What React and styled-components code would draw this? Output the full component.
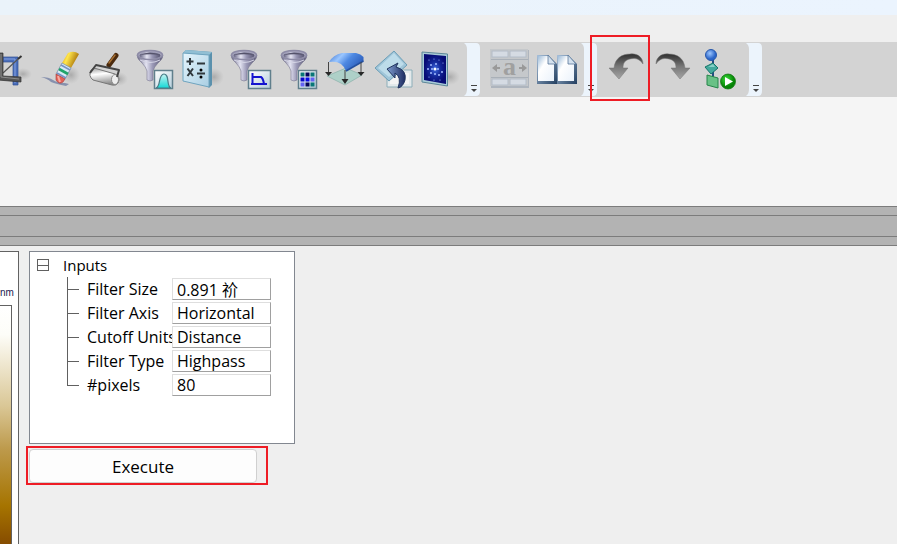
import React from "react";
import styled, { createGlobalStyle } from "styled-components";

const GlobalStyle = createGlobalStyle`
  *, *::before, *::after { box-sizing: border-box; }
  body {
    margin: 0;
    background: #efefef;
    color: #000;
    font-family: "Open Sans", "Noto Sans CJK SC", sans-serif;
    font-size: 15px;
  }
  button, input, select { font: inherit; color: inherit; }
`;

const Page = styled.div`
  min-height: 100vh;
  display: flex;
  flex-direction: column;
  overflow: hidden;
`;

const TitleStrip = styled.div`
  height: 15px;
  background: linear-gradient(90deg, #eaf3fa, #ebf4fe);
`;

const MenuStrip = styled.div`
  height: 27px;
  background: #efefef;
`;

const Toolbar = styled.div`
  height: 55px;
  display: flex;
  gap: 5px;
  background: #d3d3d3;
`;

const ToolGroup = styled.div`
  display: flex;
  flex: none;
`;

const ToolButton = styled.button`
  position: relative;
  width: ${(p) => (p.$clipped ? 32 : 48)}px;
  height: 55px;
  padding: 0;
  border: 0;
  background: none;
  display: flex;
  justify-content: flex-end;
  svg { flex: none; display: block; }
`;

const OverflowButton = styled.button`
  width: 16px;
  height: 55px;
  padding: 0;
  border: 0;
  background: none;
  svg { display: block; }
`;

const Marker = styled.span`
  position: absolute;
  inset: -7px 0 -4px -12px;
  border: 2px solid #ee1c25;
  pointer-events: none;
`;

const Workspace = styled.div`
  height: 109px;
  background: #f5f5f5;
`;

const Divider = styled.div`
  height: 40px;
  flex: none;
  padding: 8px 0;
  background: #b3b3b3;
  border-top: 1px solid #7c7c7c;
  border-bottom: 1px solid #7c7c7c;
  &::before {
    content: "";
    display: block;
    height: 22px;
    border-top: 1px solid #7c7c7c;
    border-bottom: 1px solid #7c7c7c;
  }
`;

const Content = styled.main`
  flex: 1;
  display: flex;
  align-items: stretch;
  gap: 7px;
  padding-top: 5px;
`;

const ScalePanel = styled.section`
  width: 19px;
  display: flex;
  flex-direction: column;
  background: #fff;
  border: solid #626262;
  border-width: 1px 1px 0 0;
`;

const ScaleUnit = styled.div`
  height: 53px;
  padding-top: 34px;
  font-family: "Liberation Sans", sans-serif;
  font-size: 10px;
  line-height: 14px;
  color: #1c1c50;
`;

const ScaleBar = styled.div`
  flex: 1;
  width: 12px;
  border: solid #626262;
  border-width: 1px 1px 0 0;
  background: linear-gradient(#fff 0%, #fdfdf8 12%, #dac796 42%, #bd9a4c 60%, #a67400 84%, #864c00 100%);
`;

const Side = styled.form`
  width: 269px;
  display: flex;
  flex-direction: column;
  align-items: flex-start;
  gap: 2px;
`;

const Tree = styled.div`
  width: 266px;
  min-height: 193px;
  margin-left: 3px;
  padding: 1px 0 0 7px;
  background: #fff;
  border: 1px solid #828790;
`;

const TreeHead = styled.button`
  display: flex;
  align-items: center;
  gap: 14px;
  height: 24px;
  padding: 0;
  border: 0;
  background: none;
  line-height: 24px;
`;

const Toggle = styled.span`
  width: 12px;
  height: 12px;
  border: 1px solid #606060;
  display: flex;
  align-items: center;
  &::before { content: ""; flex: 1; height: 1px; background: #606060; }
`;

const Row = styled.div`
  display: grid;
  grid-template-columns: 12px 93px 99px;
  align-items: center;
  height: 24px;
  margin-left: 30px;
`;

const Branch = styled.span`
  align-self: stretch;
  display: flex;
  flex-direction: column;
  border-left: ${(p) => (p.$last ? 0 : 1)}px solid #606060;
  &::before {
    content: "";
    height: 13px;
    border-bottom: 1px solid #606060;
    border-left: ${(p) => (p.$last ? 1 : 0)}px solid #606060;
  }
`;

const Label = styled.label`
  padding-left: 8px;
  line-height: 24px;
  white-space: nowrap;
`;

const Field = styled.input`
  width: 99px;
  height: 22px;
  padding: 0 4px;
  margin: 0;
  appearance: none;
  border: 1px solid;
  border-color: #dedede #a0a0a0 #a0a0a0 #dedede;
  border-radius: 0;
  background: #fff;
  line-height: 20px;
  outline: none;
`;

const Rows = styled.div`
  font-size: 16px;
`;

const ExecuteFrame = styled.div`
  width: 242px;
  height: 39px;
  padding: 1px;
  border: 2px solid #ee1c25;
`;

const ExecuteButton = styled.button`
  display: block;
  width: 228px;
  height: 34px;
  padding: 0;
  border: 1px solid #d0d0d0;
  border-radius: 4px;
  background: #fdfdfd;
  font-size: 17px;
  font-weight: 500;
`;

const Icon = ({ children, x = 0, w = 48 }) => (
  <svg width={w} height="55" viewBox={`${x} 0 ${w} 55`} aria-hidden="true">{children}</svg>
);

const Shadow = ({ cx, cy, rx = 9, ry = 6 }) => (
  <ellipse cx={cx} cy={cy} rx={rx} ry={ry} fill="url(#shade)" />
);

const HiddenSvg = styled.svg`
  position: absolute;
`;

const Defs = () => (
  <HiddenSvg width="0" height="0" aria-hidden="true">
    <defs>
      <radialGradient id="shade"><stop offset="0" stopColor="#999" stopOpacity=".7" /><stop offset="1" stopColor="#aaa" stopOpacity="0" /></radialGradient>
      <linearGradient id="metal"><stop offset="0" stopColor="#5f5d7c" /><stop offset=".35" stopColor="#e4e4f2" /><stop offset=".6" stopColor="#9a98b6" /><stop offset="1" stopColor="#55536f" /></linearGradient>
      <linearGradient id="roll" x2="0.2" y2="1"><stop offset="0" stopColor="#999" /><stop offset=".4" stopColor="#fff" /><stop offset="1" stopColor="#8c8c8c" /></linearGradient>
      <linearGradient id="badge" x2="1" y2="1"><stop offset="0" stopColor="#fff" /><stop offset="1" stopColor="#b5cedb" /></linearGradient>
      <linearGradient id="cyan" x2="0" y2="1"><stop offset="0" stopColor="#c7f4f3" /><stop offset="1" stopColor="#12d8d6" /></linearGradient>
      <linearGradient id="glass" x2="1" y2="1"><stop offset="0" stopColor="#e6f5fc" /><stop offset="1" stopColor="#a9cee3" /></linearGradient>
      <linearGradient id="yellow" x2="1" y2=".4"><stop offset="0" stopColor="#d79300" /><stop offset=".4" stopColor="#ffe64c" /><stop offset="1" stopColor="#a36b04" /></linearGradient>
      <linearGradient id="sheet" x2="1" y2=".5"><stop offset="0" stopColor="#3a70cc" /><stop offset=".35" stopColor="#9ac6ff" /><stop offset=".6" stopColor="#4e89e2" /><stop offset="1" stopColor="#2b5dbb" /></linearGradient>
      <radialGradient id="night"><stop offset="0" stopColor="#3f6be0" /><stop offset=".5" stopColor="#14299a" /><stop offset="1" stopColor="#070b74" /></radialGradient>
      <linearGradient id="arrow" x2="0" y2="1"><stop offset="0" stopColor="#303030" /><stop offset=".5" stopColor="#777" /><stop offset="1" stopColor="#a5a5a5" /></linearGradient>
      <linearGradient id="navy" x2="1" y2="0"><stop offset="0" stopColor="#7f9ed0" /><stop offset="1" stopColor="#1d2b61" /></linearGradient>
      <linearGradient id="page" x2="1" y2="1"><stop offset="0" stopColor="#9dbbd8" /><stop offset=".35" stopColor="#fff" /><stop offset="1" stopColor="#eaf2fb" /></linearGradient>
      <linearGradient id="pageEdge" x2="1" y2="1"><stop offset="0" stopColor="#a8c0da" /><stop offset="1" stopColor="#233f60" /></linearGradient>
      <radialGradient id="ball" cx=".4" cy=".35"><stop offset="0" stopColor="#9cc6ff" /><stop offset="1" stopColor="#2c66c9" /></radialGradient>
      <radialGradient id="play" cx=".4" cy=".35"><stop offset="0" stopColor="#38dc38" /><stop offset="1" stopColor="#078407" /></radialGradient>
    </defs>
  </HiddenSvg>
);

const Funnel = ({ cx = 22 }) => (
  <g transform={`translate(${cx - 22} 0)`}>
    <path d="M9 13Q9 17 14 21Q18 25 19 29V38Q22 40 25 38V29Q26 25 30 21Q35 17 35 13Z" fill="url(#metal)" stroke="#797790" strokeWidth=".6" />
    <path d="M12 18Q22 23 32 18" fill="none" stroke="#d5d5e6" />
    <ellipse cx="22" cy="13" rx="12.500" ry="4.500" fill="#a5a4bc" stroke="#8d8ba6" strokeWidth="1.500" />
    <ellipse cx="22" cy="13.500" rx="10.500" ry="3.200" fill="url(#metal)" />
    <path d="M11.500 13Q22 8 32.500 13Q22 11.500 11.500 13" fill="#55536b" />
  </g>
);

const Badge = ({ x = 26, w = 19 }) => (
  <rect x={x + 0.5} y="28.500" width={w - 1} height="18" fill="url(#badge)" stroke="#607f8c" strokeWidth="1.500" />
);

const CropIcon = () => (
  <Icon x={16} w={32}>
    <Shadow cx={39} cy={32} />
    <path d="M17 15H34V43H29V20H17Z" fill="#4b6fbc" stroke="#304d91" strokeWidth=".7" />
    <path d="M20 17H31V41" fill="none" stroke="#86a2df" />
    <path d="M19 31L34 17" stroke="#555" strokeWidth="1.200" /><path d="M34 17L37.500 14" stroke="#333" strokeWidth="2" />
    <path d="M14 11H19V34L37 35V40L14 38Z" fill="#555" stroke="#303030" strokeWidth=".7" />
    <path d="M17 12V35L35 37" fill="none" stroke="#8b8b8b" />
  </Icon>
);

const EraserIcon = () => (
  <Icon>
    <Shadow cx={39} cy={33} rx={9} ry={9} />
    <path d="M9 35Q17 35 21 38T33 41L37 42L34 44Q24 42 19 40Q16 37 9 35" fill="#67759e" opacity=".7" />
    <path d="M36 11Q42 8 47 12L39 26L30 21Z" fill="url(#yellow)" />
    <path d="M30 21L39 26L33 37L24 32Z" fill="#d7eaf5" stroke="#7387a4" strokeWidth=".7" />
    <path d="M29 23L38 28M25 31L34 36" stroke="#7691c4" strokeWidth="1.500" />
    <path d="M27 27L36 32" stroke="#20a46a" strokeWidth="2.600" />
    <path d="M24 32L33 37L31 40Q27 43 24 38Z" fill="#e36158" stroke="#a83a38" strokeWidth=".6" />
    <path d="M26 34L28 40" stroke="#f7aaa0" strokeWidth="2" />
  </Icon>
);

const RollerIcon = () => (
  <Icon>
    <Shadow cx={39} cy={37} rx={9} ry={7} />
    <path d="M29 23L36 13.500" stroke="#4b2a0d" strokeWidth="5" strokeLinecap="round" />
    <path d="M29 21L35 13" stroke="#a77032" strokeWidth="1.500" strokeLinecap="round" />
    <path d="M14 26L35 32Q41 35 38 41Q36 44 32 43L13 38Q8 34 11 28Z" fill="url(#roll)" stroke="#777" />
    <ellipse cx="35" cy="37.500" rx="3.500" ry="5" fill="#eee" stroke="#888" />
    <path d="M10 31L16 23L39 28L37 35" fill="none" stroke="#444" strokeWidth="2" strokeLinejoin="round" />
  </Icon>
);

const CurveFilterIcon = () => (
  <Icon><Funnel /><Badge /><path d="M28 46C33 45 30 32 36 32S38 45 43 46Z" fill="url(#cyan)" stroke="#477c86" strokeWidth="1.200" /></Icon>
);

const MathIcon = () => (
  <Icon>
    <Shadow cx={38} cy={35} rx={10} ry={9} />
    <path d="M7 11L10 8L36 10V43L33 46Z" fill="#5b91ad" /><path d="M7 11L10 8L36 10L33 13Z" fill="#91bfd4" />
    <path d="M7 11L33 13V45L7 39Z" fill="url(#glass)" stroke="#6fa4bf" />
    <path d="M10.500 19.500H17.500M14 16V23M21 21.500H29M11.500 26.500L17 34M17 26.500L11.500 34M21 31.500H29" stroke="#30383d" strokeWidth="2" />
    <circle cx="25" cy="28" r="1.500" /><circle cx="25" cy="35" r="1.500" />
  </Icon>
);

const BandFilterIcon = () => (
  <Icon><Funnel cx={20} /><Badge x={24} w={23} /><path d="M28.500 31V42M27 42H43M28 35H37Q39 36 40 42" fill="none" stroke="#1414cf" strokeWidth="2" /></Icon>
);

const dots = ["#087777", "#05055a", "#087777", "#0808c9", "#0808e8", "#6464f2", "#6464f2", "#05055a", "#087777"];
const MatrixFilterIcon = () => (
  <Icon><Funnel /><Badge />
    {dots.map((c, i) => <rect key={i} x={28.5 + (i % 3) * 5} y={30.5 + Math.floor(i / 3) * 5} width="4" height="4" fill={c} />)}
  </Icon>
);

const LevelIcon = () => (
  <Icon>
    <path d="M7 34L26 26L42 33L25 43Z" fill="#aed0c8" stroke="#8bb0aa" strokeWidth=".7" />
    <path d="M9 20Q13 13 22 11H36Q41 12 43.500 15V19L26 29Q22 18 9 20" fill="url(#sheet)" />
    <path d="M26 29L43.500 19" stroke="#24509f" strokeWidth="1.500" />
    <path d="M8.500 20V31M25 28V38M41 20V31" stroke="#444" />
    <path d="M5 30H12L8.500 34ZM21.500 37H28.500L25 42ZM37.500 30H44.500L41 34Z" fill="#282828" />
  </Icon>
);

const RotateIcon = () => (
  <Icon>
    <path d="M19 28H44V45H19Z" fill="#e3e9eb" stroke="#8daeb9" /><path d="M22 31H41V42H22Z" fill="#f4f4f4" />
    <path d="M26 9L39 23L21 39L7 26Z" fill="#9fc5d9" stroke="#6c9eb6" /><path d="M26 11L36 22L21 35L10 26Z" fill="#bddcea" />
    <path d="M19 27L30 21L28 25Q39 28 37 38Q35 45 30 46Q34 35 27 31V36Z" fill="url(#navy)" stroke="#20345e" />
  </Icon>
);

const stars = [[18, 17], [23, 18], [13, 18], [27, 21], [15, 23], [20, 22], [12, 27], [16, 27], [22, 27], [26, 30], [15, 31], [19, 32], [23, 33], [13, 35], [18, 38], [24, 38]];
const SpectrumIcon = () => (
  <Icon>
    <Shadow cx={34} cy={35} rx={10} ry={8} />
    <path d="M6 10L31.500 12V44L6 40Z" fill="#a9cbd8" stroke="#5d8798" />
    <path d="M8 12L30 14V42L8 38Z" fill="url(#night)" />
    {stars.map(([x, y], i) => <circle key={i} cx={x} cy={y} r={i > 3 && i < 13 ? 1 : 0.6} fill="#a3bcff" />)}
    <circle cx="19" cy="27" r="1.500" fill="#fff" />
  </Icon>
);

const TableIcon = () => (
  <Icon>
    <rect x="6" y="8" width="38" height="38" fill="#aeb5be" /><rect x="5" y="7" width="38" height="37" fill="#c5c8cb" />
    {[[7, 9], [25, 9], [7, 37], [25, 37]].map(([x, y]) => <rect key={`${x}-${y}`} x={x} y={y} width="16" height="6" fill="#d5dbe3" stroke="#b3bcc8" />)}
    <path d="M6 17.500H43M6 35.500H43" stroke="#a9b0b8" />
    <path d="M7 26L12 22V25H15V27H12V30ZM42 26L37 22V25H34V27H37V30Z" fill="#999" />
    <text x="24.500" y="33" textAnchor="middle" fontFamily="Liberation Serif, serif" fontSize="26" fontWeight="bold" fill="#a0a0a0">a</text>
  </Icon>
);

const PagesIcon = () => (
  <Icon>
    {[4, 24].map((x) => (
      <g key={x} transform={`translate(${x} 0)`}>
        <path d="M0 13H11L20 22V42H0Z" fill="url(#pageEdge)" /><path d="M1 14H11L17 22V39H1Z" fill="url(#page)" />
        <path d="M11 13V22H19Z" fill="#d4e1ee" stroke="#58779a" strokeWidth=".8" />
      </g>
    ))}
  </Icon>
);

const arrowPath = "M12 26C13 16 20 12 28 12C35 11 41 15 41 22C37 16 32 16 28 17C23 18 21 21 21 26H26L17 37L7 26Z";
const UndoIcon = () => <Icon><path d={arrowPath} fill="url(#arrow)" stroke="#777" strokeWidth=".5" /></Icon>;
const RedoIcon = () => <Icon><path d={arrowPath} transform="translate(47 0) scale(-1 1)" fill="url(#arrow)" stroke="#777" strokeWidth=".5" /></Icon>;

const RunIcon = () => (
  <Icon>
    <path d="M15 14V38" stroke="#244d80" strokeWidth="2" />
    <circle cx="13" cy="13" r="5.500" fill="url(#ball)" stroke="#2858ab" />
    <path d="M7 25L15 21L20 26L13 32Z" fill="#44a99d" stroke="#167669" /><path d="M10 25L15 22L17 25" fill="#87d0c7" />
    <path d="M9 33L20 36V46L9 43Z" fill="#69c186" stroke="#26854a" />
    <circle cx="30" cy="39.500" r="7.500" fill="url(#play)" stroke="#087308" strokeWidth=".7" /><path d="M27 35L35 39.500L27 44Z" fill="#fff" />
  </Icon>
);

const Overflow = () => (
  <OverflowButton type="button" aria-label="More tools">
    <svg width="16" height="55" viewBox="0 0 16 55" aria-hidden="true">
      <path d="M0 1H12Q16 1 16 6V49Q16 54 12 54H0Q3 52 3 47V7Q3 3 0 1Z" fill="#ecf4fc" />
      <path d="M7 43.500H13" stroke="#444" /><path d="M7 47H13L10 50Z" fill="#444" />
    </svg>
  </OverflowButton>
);

const editTools = [
  ["Crop", CropIcon], ["Erase", EraserIcon], ["Level surface", RollerIcon], ["Curve filter", CurveFilterIcon],
  ["Math", MathIcon], ["Band filter", BandFilterIcon], ["Matrix filter", MatrixFilterIcon],
  ["Plane fit", LevelIcon], ["Rotate", RotateIcon], ["Spectrum", SpectrumIcon],
];
const viewTools = [["Resize columns", TableIcon], ["Pages", PagesIcon]];
const historyTools = [["Undo", UndoIcon, true], ["Redo", RedoIcon], ["Run workflow", RunIcon]];

const Tools = ({ items }) => (
  <ToolGroup>
    {items.map(([name, Glyph, marked]) => (
      <ToolButton key={name} type="button" aria-label={name} $clipped={name === "Crop"}>
        <Glyph />{marked && <Marker />}
      </ToolButton>
    ))}
    <Overflow />
  </ToolGroup>
);

const inputs = [
  { id: "size", label: "Filter Size", value: "0.891 祄" },
  { id: "axis", label: "Filter Axis", value: "Horizontal", options: ["Horizontal"] },
  { id: "units", label: "Cutoff Units", value: "Distance", options: ["Distance"] },
  { id: "type", label: "Filter Type", value: "Highpass", options: ["Highpass"] },
  { id: "pixels", label: "#pixels", value: "80" },
];

export default function App() {
  return (
    <Page>
      <GlobalStyle />
      <Defs />
      <TitleStrip />
      <MenuStrip />
      <Toolbar role="toolbar">
        <Tools items={editTools} />
        <Tools items={viewTools} />
        <Tools items={historyTools} />
      </Toolbar>
      <Workspace />
      <Divider />
      <Content>
        <ScalePanel>
          <ScaleUnit>nm</ScaleUnit>
          <ScaleBar />
        </ScalePanel>
        <Side onSubmit={(e) => e.preventDefault()}>
          <Tree>
            <TreeHead type="button" aria-expanded="true"><Toggle />Inputs</TreeHead>
            <Rows>
              {inputs.map((f, i) => (
                <Row key={f.id}>
                  <Branch $last={i === inputs.length - 1} />
                  <Label htmlFor={f.id}>{f.label}</Label>
                  {f.options ? (
                    <Field as="select" id={f.id} defaultValue={f.value}>
                      {f.options.map((o) => <option key={o}>{o}</option>)}
                    </Field>
                  ) : (
                    <Field id={f.id} defaultValue={f.value} />
                  )}
                </Row>
              ))}
            </Rows>
          </Tree>
          <ExecuteFrame>
            <ExecuteButton type="submit">Execute</ExecuteButton>
          </ExecuteFrame>
        </Side>
      </Content>
    </Page>
  );
}
